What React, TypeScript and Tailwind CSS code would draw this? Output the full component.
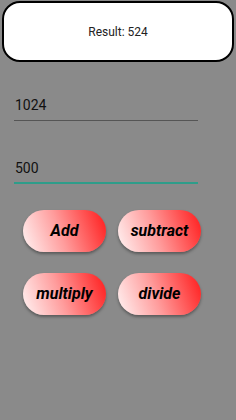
import React from "react";

const btn =
  "w-[83px] h-[42px] rounded-[21px] bg-[linear-gradient(70deg,#fff4f4_0%,#ff9c9c_45%,#ff1a1a_100%)] shadow-[0_2px_3px_rgba(0,0,0,0.35)] text-[16px] font-bold italic text-black flex items-center justify-center";

export default function App() {
  return (
    <div className="w-[236px] h-[420px] bg-[#8a8a8a] flex flex-col" style={{ fontFamily: "Roboto, sans-serif" }}>
      <div className="mx-[2px] mt-[1px] h-[61px] bg-white border-2 border-black rounded-[18px] flex items-center justify-center text-[12px] text-[#222]">
        Result: 524
      </div>
      <div className="mt-[33px] ml-[14px] w-[184px]">
        <div className="text-[14px] text-[#111] pl-[1px] leading-[20px]">1024</div>
        <div className="mt-[5px] h-[1px] bg-[#555]" />
      </div>
      <div className="mt-[37px] ml-[14px] w-[184px]">
        <div className="text-[14px] text-[#111] pl-[1px] leading-[20px]">500</div>
        <div className="mt-[4px] h-[2px] bg-[#2e9d8a]" />
      </div>
      <div className="mt-[26px] ml-[23px] grid grid-cols-[83px_83px] gap-x-[12px] gap-y-[21px]">
        <button className={btn}>Add</button>
        <button className={btn}>subtract</button>
        <button className={btn}>multiply</button>
        <button className={btn}>divide</button>
      </div>
    </div>
  );
}
